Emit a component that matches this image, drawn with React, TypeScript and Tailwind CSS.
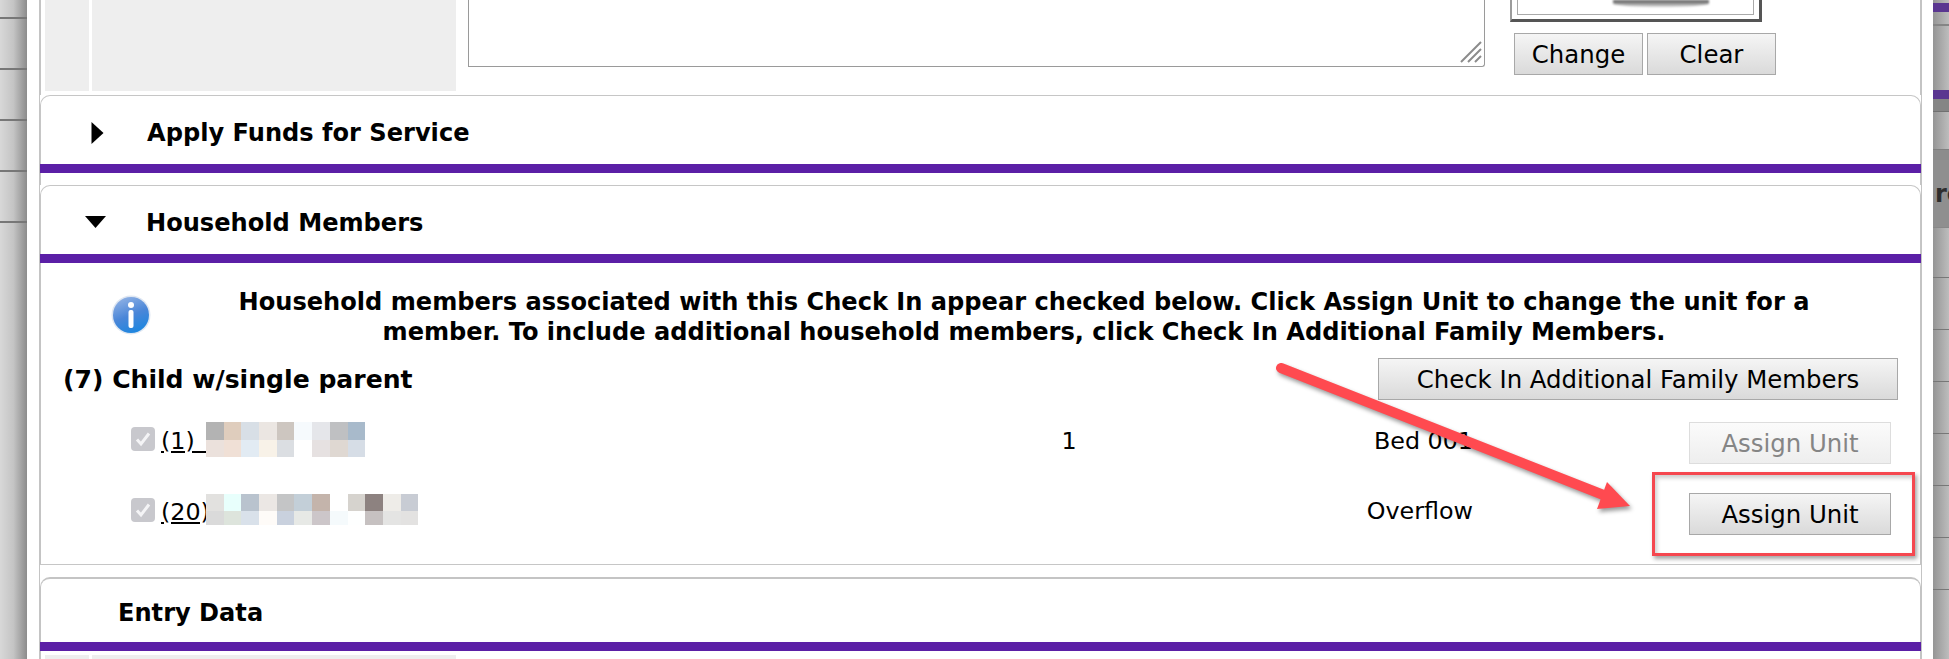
const leftBands = [19, 51, 51, 51, 51, 436]
const rightBands = [
  { h: 3, c: '' },
  { h: 9, c: 'bg-[#5a3690]' },
  { h: 12, c: '' },
  { h: 66, c: 'border-t-2 border-[#858585]' },
  { h: 9, c: 'bg-[#5a3690]' },
  { h: 12, c: 'bg-[#858585]' },
  { h: 38, c: 'border-t border-[#707070]' },
  { h: 11, c: 'bg-[#8c8c8c] border-t border-[#808080]' },
  { h: 67, c: 'bg-[#8f8f8f]' },
  { h: 50, c: 'border-t border-[#888]' },
  { h: 52, c: 'border-t border-[#777]' },
  { h: 52, c: 'border-t border-[#777]' },
  { h: 52, c: 'border-t border-[#777]' },
  { h: 52, c: 'border-t border-[#777]' },
  { h: 52, c: 'border-t border-[#777]' },
  { h: 52, c: 'border-t border-[#777]' },
  { h: 18, c: 'border-t border-[#777]' },
]

const blurOne = [
  ['#b3b3b3', '#dfcdbd', '#d8dfe6', '#ebe6e2', '#cdc6c0', '#f6fafd', '#e5e6ea', '#bfc0c2', '#a8bacb'],
  ['#ebe1dc', '#f0e0d6', '#e2ebf3', '#f8f2e8', '#dbdee2', '#ffffff', '#e6e1e1', '#dfd8d2', '#d6dde6'],
]
const blurTwo = [
  ['#e2e1df', '#e8fffc', '#b9c3ce', '#ebe7e4', '#c4c5c6', '#c3cfd8', '#c4b4ab', '#ffffff', '#d6d3ce', '#8d8280', '#eeece8', '#c8ccd4'],
  ['#dadada', '#dde4dc', '#d9e1ea', '#fefbf8', '#c9d1de', '#e7e9e6', '#ccc6c9', '#f5fafc', '#feffff', '#c6c1c1', '#e4e4e3', '#e3e2e1'],
]

function Blur({ rows, top, heights }: { rows: string[][]; top: string; heights: string[] }) {
  return (
    <div className={`relative flex flex-col ${top}`}>
      {rows.map((row, i) => (
        <div key={i} className={`flex ${heights[i]}`}>
          {row.map((color, j) => (
            <div key={j} className="w-[17.7px]" style={{ backgroundColor: color }} />
          ))}
        </div>
      ))}
    </div>
  )
}

function GrayButton({ label, className, disabled }: { label: string; className: string; disabled?: boolean }) {
  const skin = disabled
    ? 'border-[#dddddd] bg-gradient-to-b from-[#fbfbfb] to-[#eeeeee] text-[#858585]'
    : 'border-[#a8a8a8] bg-gradient-to-b from-[#f5f5f5] to-[#dadada] text-black'
  return (
    <div className={`flex h-[42px] items-center justify-center border pt-[2px] text-[24.4px] ${skin} ${className}`}>
      {label}
    </div>
  )
}

function Checked() {
  return (
    <div className="flex h-[24px] w-[24px] items-center justify-center rounded-[4px] bg-[#c8c8cd]">
      <svg width="16" height="16" viewBox="0 0 16 16">
        <path d="M2 8.5 L6 13 L14 2.5" fill="none" stroke="#f4f4f6" strokeWidth="3" />
      </svg>
    </div>
  )
}

function PanelHead({ title, icon }: { title: string; icon: 'right' | 'down' }) {
  return (
    <div className="-mx-[1px] bg-white">
      <div className="flex h-[69px] items-center rounded-t-[10px] border-x border-t border-[#c6c6c6]">
        {icon === 'right' && (
          <svg className="ml-[50px] mr-[43px] mt-[5px]" width="13" height="22" viewBox="0 0 13 22">
            <path d="M0.5 0 L12.5 11 L0.5 22 Z" fill="#000" />
          </svg>
        )}
        {icon === 'down' && (
          <svg className="ml-[44px] mr-[40px] mt-[3px]" width="21" height="12" viewBox="0 0 21 12">
            <path d="M0 0 L21 0 L10.5 12 Z" fill="#000" />
          </svg>
        )}
        <span className="mt-[6px] text-[24.1px] font-bold leading-none text-black">{title}</span>
      </div>
      <div className="h-[9px] bg-[#5b1fa6]" />
    </div>
  )
}

export default function App() {
  return (
    <div className="relative flex h-[659px] w-[1949px] overflow-hidden bg-white font-['DejaVu_Sans',_sans-serif] text-black">
      <div className="flex w-[27px] shrink-0 flex-col bg-gradient-to-r from-[#d8d8d8] via-[#c4c4c4] to-[#8c8c8c]">
        {leftBands.map((h, i) => (
          <div key={i} className="shrink-0 border-b-2 border-[#777777] last:border-b-0" style={{ height: h }} />
        ))}
      </div>

      <div className="ml-[12px] flex w-[1883px] shrink-0 flex-col border-x-2 border-[#c4c4c4]">
        <div className="flex h-[95px] shrink-0 pl-[4px]">
          <div className="h-[91px] w-[44px] bg-[#eeeeee]" />
          <div className="ml-[3px] h-[91px] w-[364px] bg-[#eeeeee]" />
          <div className="ml-[12px] flex h-[67px] w-[1017px] items-end justify-end rounded-br-[3px] border-x border-b border-[#9a9a9a] pb-[3px] pr-[2px]">
            <svg width="22" height="22" viewBox="0 0 22 22">
              <path d="M1 21 L21 1 M8 21 L21 8 M15 21 L21 15" stroke="#8c8c8c" strokeWidth="2" />
            </svg>
          </div>
          <div className="ml-[25px] flex flex-col">
            <div className="h-[22px] w-[252px] border-b-[3px] border-l-[2px] border-r-[3px] border-b-[#555555] border-l-[#9c9c9c] border-r-[#555555] px-[5px] pb-[4px]">
              <div className="flex h-[15px] justify-center overflow-hidden border-x border-b border-[#aaaaaa] pl-[50px]">
                <div className="h-[7px] w-[96px] rounded-b-[50%] bg-gradient-to-b from-[#555555] to-[#dddddd] blur-[1px]" />
              </div>
            </div>
            <div className="ml-[4px] mt-[11px] flex gap-[4px]">
              <GrayButton label="Change" className="w-[129px]" />
              <GrayButton label="Clear" className="w-[129px]" />
            </div>
          </div>
        </div>

        <PanelHead title="Apply Funds for Service" icon="right" />
        <div className="h-[12px] shrink-0" />

        <PanelHead title="Household Members" icon="down" />
        <div className="flex h-[301px] shrink-0 flex-col">
          <div className="flex pt-[23px]">
            <svg className="ml-[70px] mt-[9px]" width="40" height="40" viewBox="0 0 40 40">
              <defs>
                <linearGradient id="infoBlue" x1="0.3" y1="0" x2="0.7" y2="1">
                  <stop offset="0" stopColor="#8eb0e4" />
                  <stop offset="0.5" stopColor="#4a86d8" />
                  <stop offset="1" stopColor="#1a86e0" />
                </linearGradient>
              </defs>
              <circle cx="20" cy="20" r="19.5" fill="#dfe7f2" />
              <circle cx="20" cy="20" r="18" fill="url(#infoBlue)" />
              <circle cx="20" cy="10" r="3" fill="#ffffff" />
              <rect x="17.5" y="15" width="5" height="18" rx="2" fill="#ffffff" />
            </svg>
            <div className="ml-[63px] mt-[1px] -mb-[1px] w-[1620px] text-center text-[24.1px] font-bold leading-[30px]">
              Household members associated with this Check In appear checked below. Click Assign Unit to change the unit for a member. To include additional household members, click Check In Additional Family Members.
            </div>
          </div>

          <div className="mt-[12px] flex h-[42px] items-center justify-between pl-[22px] pr-[22px]">
            <span className="mt-[2px] text-[25.1px] font-bold">(7) Child w/single parent</span>
            <GrayButton label="Check In Additional Family Members" className="w-[520px]" />
          </div>

          <div className="mt-[22px] flex flex-col gap-[29px] pl-[90px] pr-[29px]">
            <div className="grid h-[42px] grid-cols-[869px_138px_335px_1fr] text-[23.8px]">
              <div className="flex items-start">
                <div className="mt-[5px]"><Checked /></div>
                <span className="ml-[6px] mt-[2px] w-[45px] whitespace-pre underline">(1)   </span>
                <Blur rows={blurOne} top="" heights={['h-[18px]', 'h-[17px]']} />
              </div>
              <div className="mt-[2px] text-center">1</div>
              <div className="mt-[2px] text-right">Bed 001</div>
              <div className="flex justify-end"><GrayButton label="Assign Unit" className="w-[202px]" disabled /></div>
            </div>
            <div className="grid h-[42px] grid-cols-[869px_138px_335px_1fr] text-[23.8px]">
              <div className="flex items-start">
                <div className="mt-[5px]"><Checked /></div>
                <span className="ml-[6px] mt-[2px] w-[45px] whitespace-pre underline">(20)</span>
                <Blur rows={blurTwo} top="mt-[1px]" heights={['h-[17px]', 'h-[14px]']} />
              </div>
              <div />
              <div className="mt-[1px] text-right">Overflow</div>
              <div className="flex justify-end"><GrayButton label="Assign Unit" className="w-[202px]" /></div>
            </div>
          </div>
        </div>

        <div className="-mx-[1px] h-[13px] shrink-0 border-t border-[#c6c6c6] bg-white" />
        <div className="-mx-[1px] shrink-0 bg-white">
          <div className="flex h-[65px] items-center rounded-t-[10px] border-x border-t-[2px] border-[#c4c4c4] pl-[77px]">
            <span className="mt-[6px] text-[24.1px] font-bold leading-none">Entry Data</span>
          </div>
          <div className="h-[9px] bg-[#5b1fa6]" />
        </div>
        <div className="flex pl-[4px] pt-[4px]">
          <div className="h-[10px] w-[44px] bg-[#eeeeee]" />
          <div className="ml-[3px] h-[10px] w-[364px] bg-[#eeeeee]" />
        </div>
      </div>

      <div className="ml-[11px] flex w-[16px] shrink-0 flex-col bg-gradient-to-r from-[#959595] to-[#bdbdbd]">
        {rightBands.map((b, i) => (
          <div key={i} className={`shrink-0 overflow-hidden ${b.c}`} style={{ height: b.h }}>
            {i === 8 && <div className="pl-[2px] pt-[22px] text-[24px] font-bold leading-none text-[#2e2e2e]">re</div>}
          </div>
        ))}
      </div>

      <div className="absolute left-[1652px] top-[472px] h-[84px] w-[263px] border-[3px] border-[#f5474f] shadow-[2px_3px_4px_rgba(0,0,0,0.35),inset_2px_3px_4px_rgba(0,0,0,0.2)]" />

      <svg className="absolute left-[1270px] top-[355px] drop-shadow-[2px_3px_2px_rgba(0,0,0,0.4)]" width="380" height="170" viewBox="0 0 380 170">
        <path d="M11 13 L336 141" stroke="#ff4a50" strokeWidth="10" strokeLinecap="round" fill="none" />
        <path d="M337 127 L360 151 L327 154 Z" fill="#ff4a50" />
      </svg>
    </div>
  )
}
